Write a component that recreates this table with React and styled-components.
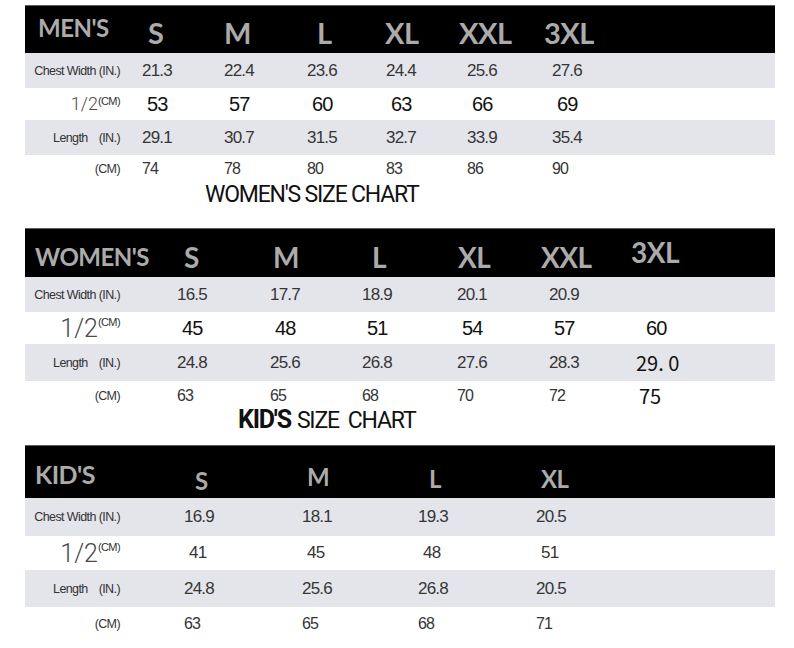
import React from "react";
import styled, { createGlobalStyle } from "styled-components";

const charts = [
  {
    title: "MEN'S",
    titleSize: 24,
    titleTop: 10,
    titleIndent: 13,
    headSize: 29,
    headHeight: 48,
    cols: "117px 82px 83px 79px 81px 85px 1fr",
    rowHeights: [35, 32, 35, 28],
    halfSize: 18,
    bigHalf: true,
    sizes: [
      { label: "S", dx: 6, top: 12 },
      { label: "M", dx: 0, top: 12 },
      { label: "L", dx: 10, top: 12 },
      { label: "XL", dx: -1, top: 12 },
      { label: "XXL", dx: -8, top: 12 },
      { label: "3XL", dx: -8, top: 12 },
    ],
    chest: ["21.3", "22.4", "23.6", "24.4", "25.6", "27.6"],
    half: ["53", "57", "60", "63", "66", "69"],
    length: ["29.1", "30.7", "31.5", "32.7", "33.9", "35.4"],
    cm: ["74", "78", "80", "83", "86", "90"],
    caption: { bold: "", text: "WOMEN'S SIZE CHART", indent: 180, height: 45, shift: 0 },
  },
  {
    title: "WOMEN'S",
    titleSize: 24,
    titleTop: 16,
    titleIndent: 10,
    headSize: 28,
    headHeight: 49,
    cols: "152px 93px 92px 95px 92px 87px 1fr",
    rowHeights: [35, 32, 37, 28],
    halfSize: 25,
    bigHalf: true,
    sizes: [
      { label: "S", dx: 7, top: 14 },
      { label: "M", dx: 3, top: 14 },
      { label: "L", dx: 10, top: 14 },
      { label: "XL", dx: 1, top: 14 },
      { label: "XXL", dx: -8, top: 14 },
      { label: "3XL", dx: -5, top: 9 },
    ],
    chest: ["16.5", "17.7", "18.9", "20.1", "20.9", ""],
    half: ["45", "48", "51", "54", "57", { v: "60", dx: 5 }],
    length: ["24.8", "25.6", "26.8", "27.6", "28.3", { v: "29. 0", alt: true }],
    cm: ["63", "65", "68", "70", "72", { v: "75", alt: true, dx: 3 }],
    caption: { bold: "KID'S", text: "SIZE  CHART", indent: 213, height: 38, shift: -2 },
  },
  {
    title: "KID'S",
    titleSize: 25,
    titleTop: 16,
    titleIndent: 10,
    headSize: 24,
    headHeight: 53,
    cols: "159px 118px 116px 118px 1fr",
    rowHeights: [38, 34, 37, 33],
    halfSize: 25,
    bigHalf: false,
    sizes: [
      { label: "S", dx: 11, top: 23 },
      { label: "M", dx: 5, top: 19 },
      { label: "L", dx: 11, top: 21 },
      { label: "XL", dx: 5, top: 21 },
    ],
    chest: ["16.9", "18.1", "19.3", "20.5"],
    half: ["41", "45", "48", "51"],
    length: ["24.8", "25.6", "26.8", "20.5"],
    cm: ["63", "65", "68", "71"],
  },
];

const GlobalStyle = createGlobalStyle`
  body {
    margin: 0;
    background: #ffffff;
  }
`;

const Page = styled.div`
  width: 794px;
  height: 648px;
  box-sizing: border-box;
  padding: 5px 19px 0 25px;
  background: #ffffff;
  overflow: hidden;
  font-family: "Liberation Sans", Arial, sans-serif;
`;

const Chart = styled.section`
  display: flex;
  flex-direction: column;
`;

const Header = styled.div`
  display: grid;
  grid-template-columns: ${(p) => p.$cols};
  height: ${(p) => p.$h}px;
  box-sizing: border-box;
  align-items: start;
  background: #000000;
  border-top: 1px solid #5c5c5c;
`;

const HeadCell = styled.div`
  padding-top: ${(p) => p.$top}px;
  margin-left: ${(p) => p.$dx || 0}px;
  font-family: Lato, "Open Sans", sans-serif;
  font-weight: 700;
  font-size: ${(p) => p.$size}px;
  line-height: 1;
  letter-spacing: -0.5px;
  color: #ababab;
  white-space: nowrap;
`;

const Row = styled.div`
  display: grid;
  grid-template-columns: ${(p) => p.$cols};
  height: ${(p) => p.$h}px;
  align-items: center;
  background: ${(p) => (p.$shaded ? "#e4e4eb" : "#ffffff")};
`;

const Label = styled.div`
  width: 95px;
  display: flex;
  justify-content: flex-end;
  align-items: ${(p) => (p.$raised ? "flex-start" : "center")};
  gap: ${(p) => p.$gap || 0}px;
  color: #333333;
  font-size: 12.5px;
  letter-spacing: -0.6px;
  white-space: nowrap;
`;

const Half = styled.span`
  font-family: Roboto, "Liberation Sans", sans-serif;
  font-weight: 300;
  font-size: ${(p) => p.$size}px;
  line-height: 1;
  letter-spacing: 0;
  color: #4a4a4a;
`;

const Unit = styled.span`
  font-size: 11px;
  line-height: 1;
  padding-top: 1px;
`;

const Value = styled.div`
  margin-left: ${(p) => p.$dx || 0}px;
  font-family: ${(p) =>
    p.$alt ? '"Noto Sans CJK SC", "DejaVu Sans", sans-serif' : '"Liberation Sans", Arial, sans-serif'};
  font-size: ${(p) => (p.$alt ? 20 : p.$big ? 20 : p.$small ? 16 : 17)}px;
  letter-spacing: ${(p) => (p.$alt ? 0 : -0.8)}px;
  color: ${(p) => (p.$big || p.$alt ? "#111111" : "#363636")};
  white-space: pre;
`;

const Caption = styled.div`
  height: ${(p) => p.$h}px;
  margin-top: ${(p) => p.$shift}px;
  padding-left: ${(p) => p.$indent}px;
  font-family: Roboto, "Liberation Sans", sans-serif;
  font-weight: 400;
  font-size: 23px;
  line-height: 1;
  letter-spacing: -1.2px;
  color: #111111;
  white-space: pre;
`;

const CaptionBold = styled.span`
  font-weight: 700;
  font-size: 25px;
  margin-right: 6px;
`;

const Cells = ({ values, big, small, shift = 0 }) =>
  values.map((item, i) => {
    const cell = typeof item === "string" ? { v: item } : item;
    return (
      <Value
        key={i}
        $dx={(cell.dx || 0) + shift}
        $alt={cell.alt}
        $big={big && !cell.alt}
        $small={small}
      >
        {cell.v}
      </Value>
    );
  });

const SizeChart = ({ chart }) => {
  const [h1, h2, h3, h4] = chart.rowHeights;
  return (
    <Chart>
      <Header $cols={chart.cols} $h={chart.headHeight}>
        <HeadCell $top={chart.titleTop} $dx={chart.titleIndent} $size={chart.titleSize}>
          {chart.title}
        </HeadCell>
        {chart.sizes.map((s) => (
          <HeadCell key={s.label} $top={s.top} $dx={s.dx} $size={chart.headSize}>
            {s.label}
          </HeadCell>
        ))}
      </Header>
      <Row $cols={chart.cols} $h={h1} $shaded>
        <Label>Chest Width (IN.)</Label>
        <Cells values={chart.chest} />
      </Row>
      <Row $cols={chart.cols} $h={h2}>
        <Label $raised>
          <Half $size={chart.halfSize}>1/2</Half>
          <Unit>(CM)</Unit>
        </Label>
        <Cells values={chart.half} big={chart.bigHalf} shift={5} />
      </Row>
      <Row $cols={chart.cols} $h={h3} $shaded>
        <Label $gap={11}>
          <span>Length</span>
          <span>(IN.)</span>
        </Label>
        <Cells values={chart.length} />
      </Row>
      <Row $cols={chart.cols} $h={h4}>
        <Label>(CM)</Label>
        <Cells values={chart.cm} small />
      </Row>
      {chart.caption && (
        <Caption
          $h={chart.caption.height}
          $indent={chart.caption.indent}
          $shift={chart.caption.shift}
        >
          {chart.caption.bold && <CaptionBold>{chart.caption.bold}</CaptionBold>}
          {chart.caption.text}
        </Caption>
      )}
    </Chart>
  );
};

const App = () => {
  return (
    <Page>
      <GlobalStyle />
      {charts.map((chart) => (
        <SizeChart key={chart.title} chart={chart} />
      ))}
    </Page>
  );
};

export default App;
